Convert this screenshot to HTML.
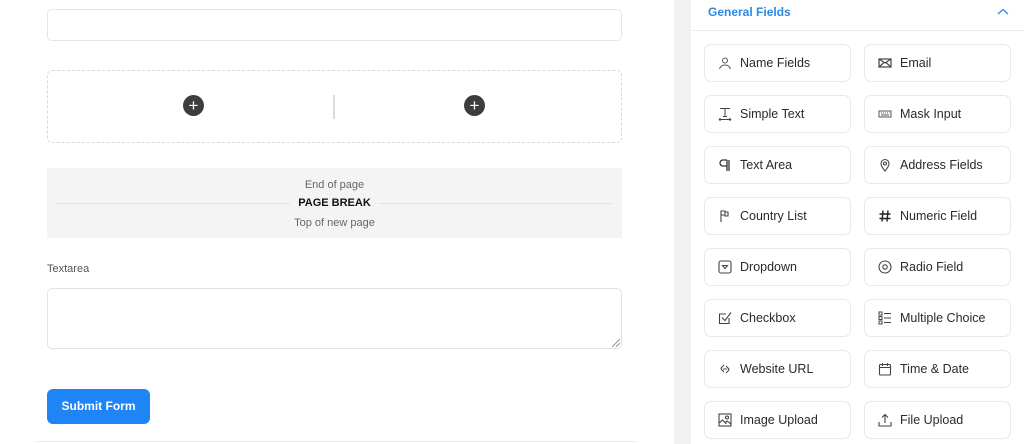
<!DOCTYPE html>
<html><head><meta charset="utf-8"><style>
*{box-sizing:border-box;margin:0;padding:0}
body{width:1024px;height:444px;overflow:hidden;background:#fff;font-family:"Liberation Sans",sans-serif;position:relative}
.a{position:absolute}
.strip{left:674px;top:0;width:17px;height:444px;background:#f1f1f1}
.inp{left:47px;top:9px;width:575px;height:32px;border:1px solid #e6e6e6;border-radius:5px}
.dash{left:47px;top:70px;width:575px;height:73px;border:1px dashed #d9d9d9;border-radius:5px}
.plus{width:21px;height:21px;border-radius:50%;background:#3d3d3d;color:#fff;text-align:center;line-height:21px;font-size:17px}
.pb{left:47px;top:168px;width:575px;height:70px;background:#f4f4f4}
.ta{left:47px;top:288px;width:575px;height:61px;border:1px solid #e3e3e3;border-radius:5px}
.btn{left:47px;top:389px;width:103px;height:35px;background:#1f84f5;border-radius:6px;color:#fff;font-size:12px;font-weight:bold;text-align:center;line-height:35px}
.card{position:absolute;width:147px;height:38px;border:1px solid #e8e8e8;border-radius:7px;font-size:12.5px;color:#2a2a2a;line-height:36px;padding-left:35px}
.card svg{position:absolute;left:13px;top:11px}
</style></head><body>
<div class="a strip"></div>
<div class="a inp"></div>
<div class="a dash"></div>
<div class="a plus" style="left:183px;top:95px">+</div>
<div class="a plus" style="left:464px;top:95px">+</div>
<div class="a" style="left:333px;top:95px;width:2px;height:24px;border-left:1px solid #ddd;border-right:1px solid #ddd"></div>
<div class="a pb"></div>
<div class="a" style="left:57px;top:203px;width:555px;height:1px;background:#e2e2e2"></div>
<div class="a" style="left:0;width:669px;top:179px;text-align:center;font-size:11px;color:#666">End of page</div>
<div class="a" style="left:290px;width:89px;top:197px;text-align:center;font-size:11px;font-weight:bold;color:#111;background:#f4f4f4">PAGE BREAK</div>
<div class="a" style="left:0;width:669px;top:217px;text-align:center;font-size:11px;color:#666">Top of new page</div>
<div class="a" style="left:47px;top:263px;font-size:11px;color:#555">Textarea</div>
<div class="a ta"></div>
<div class="a" style="left:612px;top:339px;width:8px;height:8px;background:linear-gradient(135deg,transparent 45%,#999 45%,#999 55%,transparent 55%,transparent 70%,#999 70%,#999 80%,transparent 80%)"></div>
<div class="a btn">Submit Form</div>
<div class="a" style="left:35px;top:441px;width:601px;height:1px;background:#eee"></div>

<div class="a" style="left:708px;top:5px;font-size:12px;font-weight:bold;color:#2b8ae6">General Fields</div>
<svg class="a" style="left:997px;top:8px" width="12" height="8" viewBox="0 0 12 8"><path d="M1 6L6 1.5 11 6" fill="none" stroke="#2b8ae6" stroke-width="1.3"/></svg>
<div class="a" style="left:691px;top:30px;width:333px;height:1px;background:#eee"></div>

<div class="card" style="left:704px;top:44px"><svg width="14" height="14" viewBox="0 0 14 14" fill="none" stroke="#555" stroke-width="1"><circle cx="7" cy="4.5" r="2.5"/><path d="M1.5 13c1-3 3-4 5.5-4s4.5 1 5.5 4"/></svg>Name Fields</div>
<div class="card" style="left:864px;top:44px"><svg width="14" height="14" viewBox="0 0 14 14" fill="none" stroke="#444" stroke-width="1.2"><rect x="1" y="3" width="12" height="8"/><path d="M1 3l6 4 6-4M1 11l4.5-4M13 11l-4.5-4"/></svg>Email</div>
<div class="card" style="left:704px;top:95px"><svg width="14" height="14" viewBox="0 0 14 14" fill="none" stroke="#444" stroke-width="1"><path d="M2 1.5h10M7 1.5v8M5 9.5h4M1 12.5h12M1 12.5l1.5-1.2M1 12.5l1.5 1.2M13 12.5l-1.5-1.2M13 12.5l-1.5 1.2"/></svg>Simple Text</div>
<div class="card" style="left:864px;top:95px"><svg width="14" height="14" viewBox="0 0 14 14" fill="none" stroke="#555" stroke-width="1"><rect x="1" y="4" width="12" height="6"/><path d="M3 6h1M5 6h1M7 6h1M9 6h1M11 6h0.5M3 8h8" /></svg>Mask Input</div>
<div class="card" style="left:704px;top:146px"><svg width="14" height="14" viewBox="0 0 14 14" fill="none" stroke="#333" stroke-width="1.3"><path d="M9 2H5a3 3 0 0 0 0 6h4M9 2v11M11 2v11"/></svg>Text Area</div>
<div class="card" style="left:864px;top:146px"><svg width="14" height="14" viewBox="0 0 14 14" fill="none" stroke="#444" stroke-width="1.1"><path d="M7 13C4 9.5 3 7.5 3 5.5a4 4 0 0 1 8 0c0 2-1 4-4 7.5z"/><circle cx="7" cy="5.5" r="1.5"/></svg>Address Fields</div>
<div class="card" style="left:704px;top:197px"><svg width="14" height="14" viewBox="0 0 14 14" fill="none" stroke="#444" stroke-width="1.1"><path d="M3 13V1.5M3 2h4v4H3M7 3h3v4H7z"/></svg>Country List</div>
<div class="card" style="left:864px;top:197px"><svg width="14" height="14" viewBox="0 0 14 14" fill="none" stroke="#222" stroke-width="1.4"><path d="M5 1.5L4 12.5M10 1.5L9 12.5M1.5 5h11M1.5 9.5h11"/></svg>Numeric Field</div>
<div class="card" style="left:704px;top:248px"><svg width="14" height="14" viewBox="0 0 14 14" fill="none" stroke="#444" stroke-width="1.1"><rect x="1" y="1" width="12" height="12" rx="2"/><path d="M4.5 5.5h5L7 8.5z"/></svg>Dropdown</div>
<div class="card" style="left:864px;top:248px"><svg width="14" height="14" viewBox="0 0 14 14" fill="none" stroke="#444" stroke-width="1.1"><circle cx="7" cy="7" r="6"/><circle cx="7" cy="7" r="2.2"/></svg>Radio Field</div>
<div class="card" style="left:704px;top:299px"><svg width="14" height="14" viewBox="0 0 14 14" fill="none" stroke="#444" stroke-width="1.1"><path d="M11 7v5.5H1.5V3H8"/><path d="M4 6.5l3 3L13 1.5"/></svg>Checkbox</div>
<div class="card" style="left:864px;top:299px"><svg width="14" height="14" viewBox="0 0 14 14" fill="none" stroke="#444" stroke-width="1"><rect x="1" y="1" width="3" height="3"/><rect x="1" y="5.5" width="3" height="3"/><rect x="1" y="10" width="3" height="3"/><path d="M6 2.5h7M6 7h7M6 11.5h7"/></svg>Multiple Choice</div>
<div class="card" style="left:704px;top:350px"><svg width="14" height="14" viewBox="0 0 14 14" fill="none" stroke="#444" stroke-width="1.1"><path d="M6 3L3.5 5.5a1.5 1.5 0 0 0 0 2L6 10M8 4l2.5 2.5a1.5 1.5 0 0 1 0 2L8 11M5 7h4"/></svg>Website URL</div>
<div class="card" style="left:864px;top:350px"><svg width="14" height="14" viewBox="0 0 14 14" fill="none" stroke="#444" stroke-width="1.1"><rect x="1.5" y="2.5" width="11" height="10.5" rx="1"/><path d="M1.5 5.5h11M4.5 1v3M9.5 1v3"/></svg>Time &amp; Date</div>
<div class="card" style="left:704px;top:401px"><svg width="14" height="14" viewBox="0 0 14 14" fill="none" stroke="#444" stroke-width="1.1"><rect x="1" y="1" width="12" height="12"/><circle cx="9" cy="4.5" r="1.5"/><path d="M1 10l3.5-3 4 4M7 9.5l2-1.5 4 3"/></svg>Image Upload</div>
<div class="card" style="left:864px;top:401px"><svg width="14" height="14" viewBox="0 0 14 14" fill="none" stroke="#444" stroke-width="1.1"><path d="M7 10V1.5M4 4.5l3-3 3 3M1 9v4h12V9"/></svg>File Upload</div>
</body></html>
